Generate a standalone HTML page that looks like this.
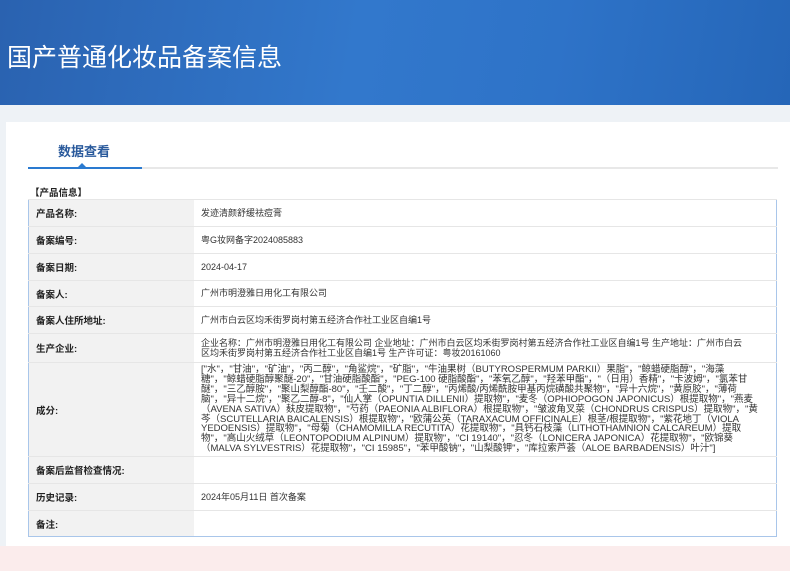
<!DOCTYPE html><html><head><meta charset="utf-8"><style>
body{margin:0;width:790px;height:571px;overflow:hidden;background:#eef2f6;font-family:"Liberation Sans","Noto Sans CJK SC",sans-serif;position:relative}
.hd{position:absolute;left:0;top:0;width:790px;height:105px;background:linear-gradient(100deg,#2a62b0 0%,#3278cc 45%,#2e73c8 70%,#2566b8 100%)}
.hd h1{position:absolute;left:7px;top:38px;margin:0;font-weight:normal;font-size:25px;color:#fff;letter-spacing:0px}
.card{position:absolute;left:6px;top:122px;width:784px;height:424px;background:#fff}
.pink{position:absolute;left:0;top:546px;width:790px;height:25px;background:#fbecec}
.tab{position:absolute;left:58px;top:141px;font-size:13px;font-weight:bold;color:#2a5a9c}
.ul{position:absolute;left:28px;top:167px;width:750px;height:2px;background:#e8e8e8}
.ul2{position:absolute;left:28px;top:167px;width:114px;height:2px;background:#2a7ad0}
.tri{position:absolute;left:78px;top:163px;width:0;height:0;border-left:4px solid transparent;border-right:4px solid transparent;border-bottom:4px solid #2a7ad0}
.sec{position:absolute;left:30px;top:185px;font-size:9.5px;font-weight:bold;color:#222}
table{position:absolute;left:28px;top:199px;width:749px;border-collapse:collapse;border:1.5px solid #a9c6ea;font-size:9px;color:#333}
td{border-top:1px solid #e6e6e6;padding:0 0 0 7px;vertical-align:middle}
td.l{width:158px;background:#f2f2f2;font-weight:bold;color:#222;font-size:9.5px}
td.v{line-height:10.5px}
.ing{font-size:9.5px;line-height:9.9px;height:93px;overflow:hidden;padding:2px 18px 0 0;box-sizing:border-box}
</style></head><body>
<div class="hd"><h1>国产普通化妆品备案信息</h1></div>
<div class="card"></div>
<div class="pink"></div>
<div class="tab">数据查看</div>
<div class="ul"></div><div class="ul2"></div><div class="tri"></div>
<div class="sec">【产品信息】</div>
<table>
<tr style="height:27px"><td class="l">产品名称:</td><td class="v">发迹清颜舒缓祛痘膏</td></tr>
<tr style="height:27px"><td class="l">备案编号:</td><td class="v">粤G妆网备字2024085883</td></tr>
<tr style="height:27px"><td class="l">备案日期:</td><td class="v">2024-04-17</td></tr>
<tr style="height:26px"><td class="l">备案人:</td><td class="v">广州市明澄雅日用化工有限公司</td></tr>
<tr style="height:27px"><td class="l">备案人住所地址:</td><td class="v">广州市白云区均禾街罗岗村第五经济合作社工业区自编1号</td></tr>
<tr style="height:29px"><td class="l">生产企业:</td><td class="v" style="padding-right:30px">企业名称：广州市明澄雅日用化工有限公司 企业地址：广州市白云区均禾街罗岗村第五经济合作社工业区自编1号 生产地址：广州市白云区均禾街罗岗村第五经济合作社工业区自编1号 生产许可证：粤妆20161060</td></tr>
<tr><td class="l">成分:</td><td class="v"><div class="ing">["水"，"甘油"，"矿油"，"丙二醇"，"角鲨烷"，"矿脂"，"牛油果树（BUTYROSPERMUM PARKII）果脂"，"鲸蜡硬脂醇"，"海藻糖"，"鲸蜡硬脂醇聚醚-20"，"甘油硬脂酸酯"，"PEG-100 硬脂酸酯"，"苯氧乙醇"，"羟苯甲酯"，"（日用）香精"，"卡波姆"，"氯苯甘醚"，"三乙醇胺"，"聚山梨醇酯-80"，"壬二酸"，"丁二醇"，"丙烯酸/丙烯酰胺甲基丙烷磺酸共聚物"，"异十六烷"，"黄原胶"，"薄荷脑"，"异十二烷"，"聚乙二醇-8"，"仙人掌（OPUNTIA DILLENII）提取物"，"麦冬（OPHIOPOGON JAPONICUS）根提取物"，"燕麦（AVENA SATIVA）麸皮提取物"，"芍药（PAEONIA ALBIFLORA）根提取物"，"皱波角叉菜（CHONDRUS CRISPUS）提取物"，"黄芩（SCUTELLARIA BAICALENSIS）根提取物"，"欧蒲公英（TARAXACUM OFFICINALE）根茎/根提取物"，"紫花地丁（VIOLA YEDOENSIS）提取物"，"母菊（CHAMOMILLA RECUTITA）花提取物"，"具钙石枝藻（LITHOTHAMNION CALCAREUM）提取物"，"高山火绒草（LEONTOPODIUM ALPINUM）提取物"，"CI 19140"，"忍冬（LONICERA JAPONICA）花提取物"，"欧锦葵（MALVA SYLVESTRIS）花提取物"，"CI 15985"，"苯甲酸钠"，"山梨酸钾"，"库拉索芦荟（ALOE BARBADENSIS）叶汁"]</div></td></tr>
<tr style="height:27px"><td class="l">备案后监督检查情况:</td><td class="v"></td></tr>
<tr style="height:27px"><td class="l">历史记录:</td><td class="v">2024年05月11日 首次备案</td></tr>
<tr style="height:26px"><td class="l">备注:</td><td class="v"></td></tr>
</table>
</body></html>
